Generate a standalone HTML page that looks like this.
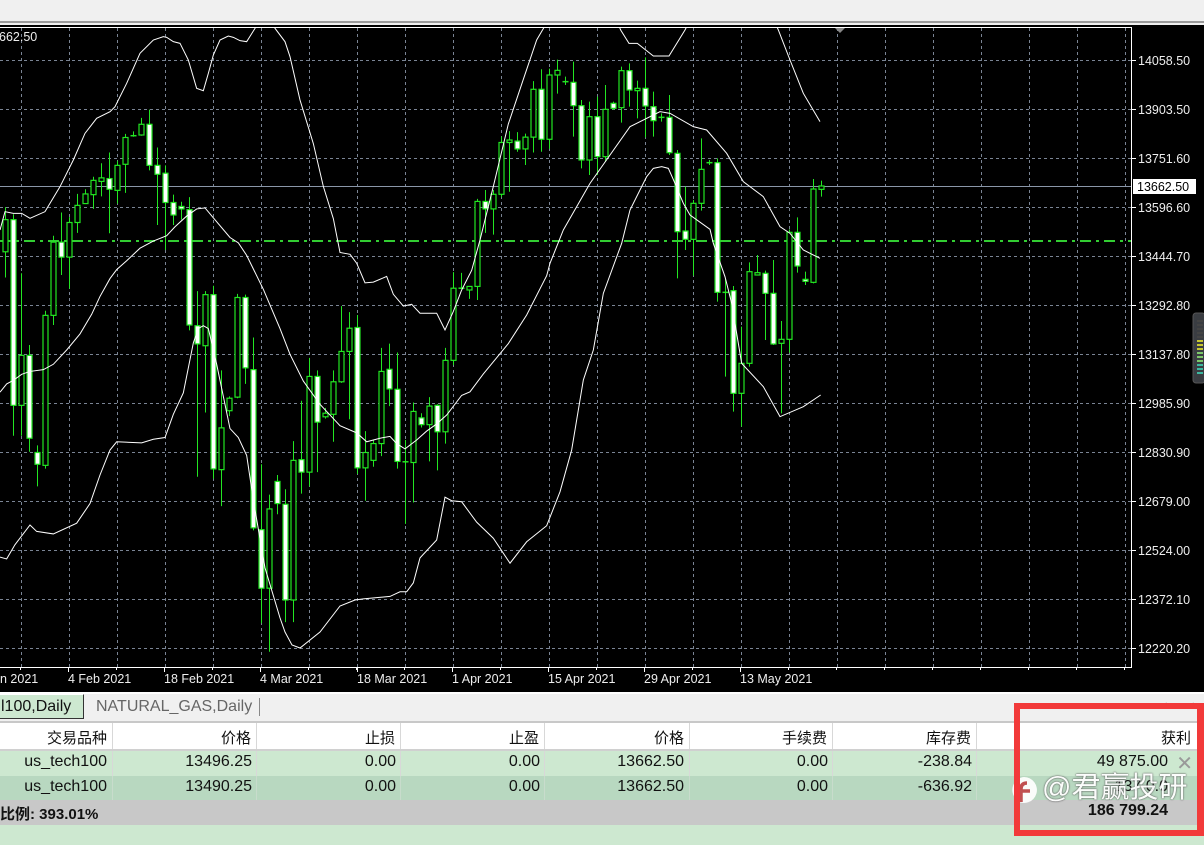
<!DOCTYPE html>
<html><head><meta charset="utf-8">
<style>
*{margin:0;padding:0;box-sizing:border-box}
body{width:1204px;height:845px;overflow:hidden;background:#f0f0f0;position:relative;font-family:"Liberation Sans","Noto Sans CJK SC",sans-serif}
#top{position:absolute;left:0;top:0;width:1204px;height:23px;background:#f0f0f0;border-bottom:2px solid #9a9a9a}
#chart{position:absolute;left:0;top:25px;width:1204px;height:667px;background:#000}
svg text{font-family:"Liberation Sans",sans-serif}
.abs{position:absolute}
.tabs{position:absolute;left:0;top:692px;width:1204px;height:31px;background:#f0f0f0;border-top:2px solid #fff;border-bottom:2px solid #c8c8c8}
.row{position:absolute;left:0;width:1204px}
.c{position:absolute;text-align:right;font-size:16px;color:#111;white-space:nowrap}
.sep{position:absolute;top:0;bottom:0;width:1px;background:#d8d8d8}
</style></head><body>
<div id="top"></div>
<div id="chart"></div>
<svg id="sv" class="abs" style="left:0;top:0" width="1204" height="692" viewBox="0 0 1204 692">
<defs><clipPath id="cp"><rect x="0" y="28" width="1131" height="639"/></clipPath></defs>
<g id="grid"></g>
<g clip-path="url(#cp)" id="plot"></g>
<g id="axis"></g>
</svg>

<div class="tabs">
  <div class="abs" style="left:0;top:0;width:84px;height:25px;background:#cde8d0;border:1px solid #333;border-left:none;border-top:1px solid #fff;font-size:16px;line-height:23px;padding-left:1px;color:#111">l100,Daily</div>
  <div class="abs" style="left:96px;top:0;height:25px;font-size:16px;line-height:25px;color:#666">NATURAL_GAS,Daily</div>
  <div class="abs" style="left:259px;top:4px;width:1px;height:18px;background:#888"></div>
  <div class="abs" style="left:1163px;top:2px;font-size:14px;color:#bbb">‹</div>
  <div class="abs" style="left:1192px;top:2px;font-size:14px;color:#bbb">›</div>
</div>

<div class="row" style="top:723px;height:28px;background:#fff;border-bottom:2px solid #d0d0d0">
  <div class="sep" style="left:112px"></div><div class="sep" style="left:256px"></div><div class="sep" style="left:400px"></div><div class="sep" style="left:544px"></div><div class="sep" style="left:689px"></div><div class="sep" style="left:832px"></div><div class="sep" style="left:976px"></div>
  <div class="c" style="right:1097px;top:4px;font-size:15px">交易品种</div>
  <div class="c" style="right:953px;top:4px;font-size:15px">价格</div>
  <div class="c" style="right:809px;top:4px;font-size:15px">止损</div>
  <div class="c" style="right:665px;top:4px;font-size:15px">止盈</div>
  <div class="c" style="right:520px;top:4px;font-size:15px">价格</div>
  <div class="c" style="right:377px;top:4px;font-size:15px">手续费</div>
  <div class="c" style="right:233px;top:4px;font-size:15px">库存费</div>
  <div class="c" style="right:13px;top:4px;font-size:15px">获利</div>
</div>
<div class="row" style="top:751px;height:25px;background:#cde8d0">
  <div class="sep" style="left:112px"></div><div class="sep" style="left:256px"></div><div class="sep" style="left:400px"></div><div class="sep" style="left:544px"></div><div class="sep" style="left:689px"></div><div class="sep" style="left:832px"></div><div class="sep" style="left:976px"></div>
  <div class="c" style="right:1097px;top:2px">us_tech100</div>
  <div class="c" style="right:952px;top:2px">13496.25</div>
  <div class="c" style="right:808px;top:2px">0.00</div>
  <div class="c" style="right:664px;top:2px">0.00</div>
  <div class="c" style="right:520px;top:2px">13662.50</div>
  <div class="c" style="right:376px;top:2px">0.00</div>
  <div class="c" style="right:232px;top:2px">-238.84</div>
  <div class="c" style="right:36px;top:2px">49 875.00</div>
  <div class="c" style="right:11px;top:0px;font-size:20px;color:#999">✕</div>
</div>
<div class="row" style="top:776px;height:24px;background:#b8d8c0">
  <div class="sep" style="left:112px;background:#c8dccc"></div><div class="sep" style="left:256px;background:#c8dccc"></div><div class="sep" style="left:400px;background:#c8dccc"></div><div class="sep" style="left:544px;background:#c8dccc"></div><div class="sep" style="left:689px;background:#c8dccc"></div><div class="sep" style="left:832px;background:#c8dccc"></div><div class="sep" style="left:976px;background:#c8dccc"></div>
  <div class="c" style="right:1097px;top:2px">us_tech100</div>
  <div class="c" style="right:952px;top:2px">13490.25</div>
  <div class="c" style="right:808px;top:2px">0.00</div>
  <div class="c" style="right:664px;top:2px">0.00</div>
  <div class="c" style="right:520px;top:2px">13662.50</div>
  <div class="c" style="right:376px;top:2px">0.00</div>
  <div class="c" style="right:232px;top:2px">-636.92</div>
  <div class="c" style="right:36px;top:2px">137 0.0</div>
</div>
<div class="row" style="top:800px;height:25px;background:#c8c8c8">
  <div class="c" style="left:0;top:3px;text-align:left;font-weight:bold;font-size:15px">比例: 393.01%</div>
  <div class="c" style="right:36px;top:2px;font-weight:bold">186 799.24</div>
</div>
<div class="row" style="top:825px;height:20px;background:#cde8d0"></div>

<!-- watermark -->
<svg class="abs" style="left:1008px;top:774px" width="32" height="36" viewBox="0 0 32 36">
<path d="M16 3 A13 13 0 1 1 9 27 L6 34 L8 25 A13 13 0 0 1 16 3Z" fill="#fff" opacity="0.92"/>
<path d="M19 9 Q13 9 13 15 L13 28 M9 17 L22 17" stroke="#c05050" stroke-width="3.5" fill="none"/>
</svg>
<div class="abs" style="left:1042px;top:771px;font-size:29px;line-height:34px;color:#fff;white-space:nowrap;font-family:'Liberation Sans','Noto Sans CJK SC',sans-serif;text-shadow:0 0 2px #666,0 0 1px #444;opacity:0.95">@君赢投研</div>
<div class="abs" style="left:1014px;top:703px;width:190px;height:133px;border:6px solid #f23a3a;border-right-width:7px"></div>

<script>
var NS="http://www.w3.org/2000/svg";
function el(p,t,a){var e=document.createElementNS(NS,t);for(var k in a)e.setAttribute(k,a[k]);p.appendChild(e);return e;}
var grid=document.getElementById('grid'),plot=document.getElementById('plot'),axis=document.getElementById('axis');
for(var k=0;k<=23;k++){var x=21+48*k+0.5;el(grid,'line',{x1:x,y1:28,x2:x,y2:667,stroke:'#7a8494','stroke-dasharray':'3 3','stroke-width':1});}
var prices=["14058.50","13903.50","13751.60","13596.60","13444.70","13292.80","13137.80","12985.90","12830.90","12679.00","12524.00","12372.10","12220.20"];
for(var i=0;i<13;i++){var y=60.5+49*i;el(grid,'line',{x1:0,y1:y,x2:1131,y2:y,stroke:'#7a8494','stroke-dasharray':'3 3','stroke-width':1});
 el(axis,'line',{x1:1131,y1:y,x2:1136,y2:y,stroke:'#fff'});
 var t=el(axis,'text',{x:1138,y:y+4.5,fill:'#eee','font-size':'12.5'});t.textContent=prices[i];}
el(plot,'line',{x1:0,y1:186.5,x2:1131,y2:186.5,stroke:'#8a96a8','stroke-width':1});
el(plot,'line',{x1:0,y1:241,x2:1131,y2:241,stroke:'#32cd32','stroke-width':2,'stroke-dasharray':'11 5 3 5'});
el(axis,'polyline',{points:'0,27.5 1131.5,27.5 1131.5,667.5 0,667.5',fill:'none',stroke:'#fff','stroke-width':1});
el(axis,'path',{d:'M835 28 L845 28 L840 33Z',fill:'#888'});
el(axis,'rect',{x:1133,y:179,width:63,height:15,fill:'#fff'});
var t=el(axis,'text',{x:1137,y:191,fill:'#000','font-size':'12.5'});t.textContent="13662.50";
var t2=el(axis,'text',{x:-1,y:41,fill:'#eee','font-size':'12.5'});t2.textContent="662.50";
var dl=[[0,"n 2021"],[68,"4 Feb 2021"],[164,"18 Feb 2021"],[260,"4 Mar 2021"],[357,"18 Mar 2021"],[452,"1 Apr 2021"],[548,"15 Apr 2021"],[644,"29 Apr 2021"],[740,"13 May 2021"]];
for(var i=0;i<dl.length;i++){var tt=el(axis,'text',{x:dl[i][0],y:683,fill:'#eee','font-size':'12.5'});tt.textContent=dl[i][1];
 if(i>0)el(axis,'line',{x1:dl[i][0]+0.5,y1:667,x2:dl[i][0]+0.5,y2:672,stroke:'#fff'});}
for(var x=20;x<1131;x+=48)el(axis,'line',{x1:x+0.5,y1:667,x2:x+0.5,y2:670,stroke:'#fff'});
var C7=[["H",335,425,300,497],["W",335,855,320,940],["H",715,855,485,940],["W",715,947,686,985],["W",987,1020,967,1082],["H",603,1023,590,1032],["H",398,603,380,630],["W",398,440,315,490],["H",343,440,328,528],["H",295,343,263,372],["H",263,290,250,290],["H",225,265,215,305],["H",218,228,177,270],["W",220,250,147,373],["H",183,253,170,290],["H",105,180,95,260],["X",100,100,88,103],["H",68,98,50,100],["W",68,183,27,197],["W",183,208,133,350],["W",205,287,183,420],["W",287,322,265,350],["W",298,305,285,335],["W",307,630,272,645],["W",632,683,535,1055],["H",545,688,535,875],["W",545,1033,520,1060],["H",918,1035,757,1137],["H",835,870,830,885],["H",553,832,543,835],["W",553,750,545,795],["W",755,1198,665,1205],["W",1203,1367,1020,1465],["H",1145,1367,1105,1545],["W",1068,1130,1050,1160]];
var C8=[["W",1300,1568,1258,1630],["H",1177,1568,1123,1630],["W",1175,1210,1010,1270],["H",942,1210,890,1250],["W",942,1070,925,1210],["H",1045,1055,1030,1060],["H",957,1048,925,1125],["H",872,957,745,960],["H",807,872,762,1062],["W",805,1198,770,1215],["H",1155,1198,1095,1290],["H",1130,1177,1120,1195],["H",928,1130,862,1165],["W",922,977,850,1025],["W",978,1180,875,1200],["X",1181,1181,1120,1355],["H",1040,1183,1015,1295],["W",1058,1077,1045,1085],["H",1025,1077,1000,1180],["W",1023,1097,1020,1205],["H",897,1097,862,1130],["H",695,897,650,910],["X",695,695,652,695],["H",690,700,690,725],["H",452,690,445,728],["W",452,473,420,540],["H",432,473,420,545],["H",287,432,270,440],["H",280,287,255,425],["W",283,305,258,313],["H",272,305,262,350],["H",138,272,115,315],["W",138,278,82,313],["H",98,278,80,305],["H",85,98,55,150]];
var C9=[["X",155,155,140,165],["W",157,227,95,320],["W",227,390,210,415],["H",260,390,215,435],["W",260,380,200,435],["H",238,380,165,395],["W",220,235,215,240],["H",122,233,110,278],["W",122,180,100,230],["H",175,182,152,265],["W",175,228,82,322],["W",230,272,185,320],["X",262,262,250,275],["W",262,368,195,375],["W",370,605,360,745],["W",603,628,470,660],["H",520,628,510,737],["H",418,520,325,542],["X",398,398,390,405],["W",398,787,385,815],["X",787,787,745,1040],["W",782,1090,768,1145],["H",1000,1090,890,1190],["H",725,1000,697,1010],["H",728,735,675,735],["W",730,790,722,930],["W",790,942,690,945],["H",928,940,873,1150],["H",607,928,598,968],["W",607,708,562,728],["W",748,753,725,765],["H",477,757,447,760],["H",468,478,452,500]];
var bars=[];
C7.forEach(function(b){bars.push([b[0]].concat(b.slice(1).map(function(v){return 100+v/2.8;})));});
C8.forEach(function(b){bars.push([b[0]].concat(b.slice(1).map(function(v){return 40+v/2.8;})));});
C9.forEach(function(b){bars.push([b[0]].concat(b.slice(1).map(function(v){return 30+v/3;})));});
var G='#22e622';
bars.forEach(function(b,k){var x=5+8*k+0.5;
 el(plot,'line',{x1:x,y1:b[3],x2:x,y2:b[4],stroke:G,'stroke-width':1});
 if(b[0]=='X'){el(plot,'line',{x1:x-3,y1:b[1],x2:x+3,y2:b[1],stroke:G,'stroke-width':1.5});}
 else{var h=Math.max(b[2]-b[1],2);el(plot,'rect',{x:x-2.5,y:b[1],width:5,height:h,fill:b[0]=='W'?'#fff':'#000',stroke:G,'stroke-width':1.2});}
});
function pts(arr){return arr.map(function(p){return p[0]+','+p[1];}).join(' ');}
var U=[];
[[0,690],[15,635],[40,640],[65,640],[90,655],[135,635],[180,560],[220,480],[255,400],[290,355],[330,335],[345,320],[380,250],[420,160],[460,120],[490,110],[500,112],[520,125],[540,130],[565,180],[590,265],[610,272],[625,220],[640,165],[660,120],[685,108],[700,112],[720,122],[740,125],[765,85]].forEach(function(p){U.push([p[0]/3,p[1]/3]);});
U.push([265,5]);
[[825,85],[855,125],[870,170],[900,300]].forEach(function(p){U.push([p[0]/3,p[1]/3]);});
[[100,290],[130,410],[160,500],[180,595],[210,600],[230,625],[255,680],[280,678],[320,662],[340,712],[370,745],[395,740],[420,765],[470,765],[495,812],[520,760],[545,700],[575,645],[600,560],[640,410],[685,235],[730,110],[770,0]].forEach(function(p){U.push([280+p[0]/3,40+p[1]/2.8]);});
U.push([560,0],[610,5]);
[[212,0],[237,40],[262,40],[310,78],[357,78],[405,0]].forEach(function(p){U.push([550+p[0]/3,30+p[1]/3]);});
U.push([700,0],[765,0]);
[[685,0],[720,90],[760,190],[810,275]].forEach(function(p){U.push([550+p[0]/3,30+p[1]/3]);});
var M=[];
[[0,818],[20,795],[40,785],[65,768],[90,760],[130,755],[160,740],[200,700],[240,655],[275,600],[300,550],[330,500],[350,475],[380,450],[420,415],[460,395],[500,380],[525,355],[560,325],[590,305],[615,302],[640,330],[690,385],[715,400],[740,435],[790,530],[840,640]].forEach(function(p){M.push([p[0]/3,100+p[1]/2.8]);});
[[30,880],[70,955],[120,1020],[180,1080],[230,1100],[260,1125],[300,1115],[330,1110],[350,1130],[375,1145],[410,1120],[440,1095],[470,1075],[500,1050],[545,995],[570,985],[610,935],[685,850],[740,770],[800,660]].forEach(function(p){M.push([280+p[0]/3,40+p[1]/2.8]);});
[[0,700],[40,600],[120,460],[240,290],[330,245],[360,250],[430,290],[470,300],[530,370],[580,455],[640,500],[690,590],[720,610],[760,660],[810,685]].forEach(function(p){M.push([550+p[0]/3,30+p[1]/3]);});
var L=[];
[[0,1280],[20,1285],[45,1245],[90,1190],[110,1208],[160,1215],[230,1185],[270,1130],[300,1050],[330,980],[350,957],[425,960],[460,950],[495,945],[520,880],[550,820],[580,680],[595,640],[610,632],[625,640],[650,740],[690,920],[715,945],[740,995],[760,1120],[795,1310],[840,1450]].forEach(function(p){L.push([p[0]/3,100+p[1]/2.8]);});
L.push([285,632],[292,645],[300,648],[320,632],[340,606],[355,600]);
[[250,1565],[330,1558],[360,1545],[380,1545],[400,1520],[420,1450],[470,1400],[495,1280],[515,1290],[545,1293],[590,1350],[640,1395],[690,1465],[740,1405],[800,1360],[840,1265]].forEach(function(p){L.push([280+p[0]/3,40+p[1]/2.8]);});
[[65,1260],[100,1050],[130,960],[160,790],[215,640],[240,540],[290,440],[310,415],[335,410],[355,415],[375,460],[400,520],[420,555],[480,598],[490,640],[525,740],[545,820],[575,1000],[640,1070],[690,1160],[760,1130],[812,1095]].forEach(function(p){L.push([550+p[0]/3,30+p[1]/3]);});
[U,M,L].forEach(function(a){el(plot,'polyline',{points:pts(a),fill:'none',stroke:'#fff','stroke-width':1});});
el(axis,'rect',{x:1193,y:313,width:12,height:70,rx:3,fill:'#3a3d42',stroke:'#555'});
for(var i=0;i<14;i++){var c=i<5?'#444':(i<8?'#c8c830':(i<11?'#7cc86a':'#3cb8a0'));el(axis,'rect',{x:1197,y:320+i*4,width:6,height:2,fill:c});}
</script>
</body></html>
